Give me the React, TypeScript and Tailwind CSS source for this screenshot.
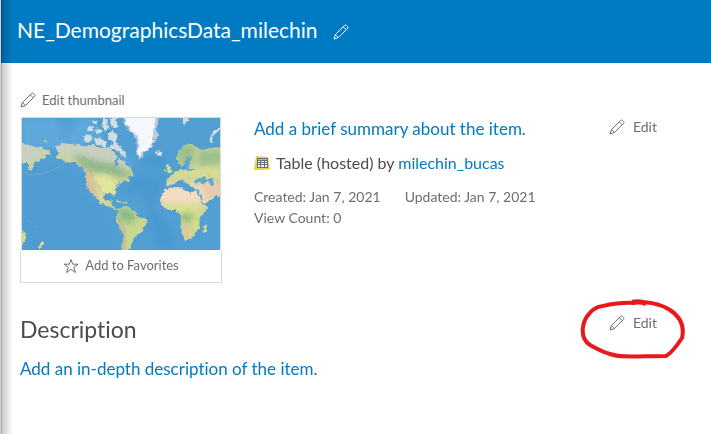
import type { ReactNode } from 'react';

function Pencil() {
  return (
    <svg className="h-4 w-4 shrink-0" viewBox="0 0 16 16" fill="none" stroke="currentColor" strokeWidth="1" strokeLinejoin="round" aria-hidden="true">
      <path d="M1 15 2.400 10.600 11.400 1.500Q12.400.5 13.400 1.400L14.600 2.600Q15.500 3.600 14.500 4.600L5.400 13.600ZM10.300 2.800 13.200 5.700M2.400 10.600 5.400 13.600" />
    </svg>
  );
}

function Star() {
  return (
    <svg className="h-4 w-4 shrink-0" viewBox="0 0 16 16" fill="none" stroke="currentColor" strokeWidth="1" aria-hidden="true">
      <path d="M8 1.500 9.700 6.200H15L10.800 9.300 12.400 14.500 8 11.300 3.600 14.500 5.200 9.300 1 6.200H6.300Z" />
    </svg>
  );
}

function TableIcon() {
  return (
    <svg className="h-4 w-4 shrink-0" viewBox="0 0 16 16" aria-hidden="true">
      <path d="M2 1 14 2 16 14.500 0 15Z" fill="#e5d34a" />
      <path d="M3 3h11v10H3Z" fill="#66707c" />
      <path d="M4 4h9v1H4Z" fill="#8fc4ec" />
      <path d="M4 6h2v1H4ZM7 6h3v1H7ZM11 6h2v1h-2ZM4 8h2v1H4ZM7 8h3v1H7ZM11 8h2v1h-2ZM4 10h2v2H4ZM7 10h3v2H7ZM11 10h2v2h-2Z" fill="#f5f5f5" />
    </svg>
  );
}

function WorldMap() {
  return (
    <svg className="block h-auto w-full" viewBox="36 99 594 396" role="img" aria-label="World map thumbnail">
      <defs>
        <filter id="soft" x="-30%" y="-30%" width="160%" height="160%" colorInterpolationFilters="sRGB"><feGaussianBlur stdDeviation="10" /></filter>
        <filter id="coast" x="-5%" y="-5%" width="110%" height="110%" colorInterpolationFilters="sRGB">
          <feTurbulence type="fractalNoise" baseFrequency=".09" numOctaves="2" seed="4" />
          <feDisplacementMap in="SourceGraphic" scale="14" xChannelSelector="R" yChannelSelector="G" />
        </filter>
        <clipPath id="land">
          <path d="M137 185 155 174 180 178 205 180 225 185 250 180 270 190 295 185 310 198 322 215 310 232 320 247 326 223 345 231 360 250 374 272 352 278 361 291 340 287 326 298 315 309 314 337 305 323 285 324 280 341 291 351 306 343 303 360 318 370 330 370 350 362 372 377 383 392 413 404 405 425 393 442 375 456 362 482 352 510 333 510 341 448 319 410 317 393 327 377 300 366 268 351 249 329 230 307 225 280 230 263 210 244 190 230 166 233 152 225 137 218 146 207Z" />
          <path d="M25 175 55 181 80 185 102 190 119 199 123 209 105 207 107 220 92 224 75 230 66 255 55 259 58 235 25 232ZM498 221 505 203 519 183 540 174 560 184 570 196 600 190 645 183V335L618 333 607 341 582 356 566 330 577 357 593 363 587 380 568 402 568 428 555 447 541 464 524 465 513 429 512 390 497 376 462 373 450 352 456 325 470 311 494 307 513 306 523 319 548 321 562 315 544 303 519 287 506 285 496 297 469 301 470 287 481 273 497 262 512 251 528 255 536 237 547 218 533 216 523 239 510 244Z" />
        </clipPath>
      </defs>
      <path d="M36 99h594v396H36Z" fill="#529fd4" />
      <g filter="url(#soft)">
        <path d="M36 99h205l40 60-60 30H36ZM310 200l70 30 80 25-20 30-60-15Z" fill="#65afdf" opacity=".65" />
        <path d="M375 230 465 205 450 315 430 370 480 415 500 495 440 495 415 375 385 310 345 340Z" fill="#3f91cc" opacity=".5" />
        <path d="M130 99h85l-50 70ZM40 275 180 240 220 330 280 380 315 495H60Z" fill="#4a99cf" opacity=".5" />
      </g>
      <g filter="url(#coast)">
        <g clipPath="url(#land)">
          <path d="M20 99h630v412H20Z" fill="#cbd49a" />
          <g filter="url(#soft)">
            <path d="M20 150H360V255L300 235 230 228 130 205 20 250Z" fill="#c9d0bf" />
            <path d="M190 205 250 225 320 240 370 270 325 280 245 258 205 235Z" fill="#8fb58a" />
            <path d="M242 262 300 268 328 285 310 335 270 350Z" fill="#e3e59b" />
            <path d="M215 250 243 260 272 340 253 340 215 300Z" fill="#d5be98" />
            <path d="M320 370 360 368 380 397 370 418 328 405Z" fill="#87ba87" />
            <path d="M355 415 405 400 380 455 350 490Z" fill="#c8d98c" />
            <path d="M312 410 335 430 345 505 325 505Z" fill="#c6a78f" />
            <path d="M498 180 560 180 545 240 505 240ZM570 195H645V236L560 240Z" fill="#9bbf8b" />
            <path d="M480 260 645 245V280H480Z" fill="#d5dd90" />
            <path d="M440 300 550 300 615 310 600 355 550 355 445 355Z" fill="#f6dcc5" />
            <path d="M580 285H645V345H580Z" fill="#e6cdae" />
            <path d="M440 370 565 364 580 375 530 384 470 380Z" fill="#e5e98d" />
            <path d="M510 385 550 387 550 409 515 405Z" fill="#7fb577" />
            <path d="M510 425 536 425 533 470 514 470Z" fill="#e8c299" />
            <path d="M545 395 575 395 575 440 545 460Z" fill="#d5df85" />
          </g>
          <path d="M211 231l30 25 8 25 18 24 15 31M322 398l20 33 1 43M520 235l18-37M591 265l38 29" stroke="#8f9973" strokeWidth="3" fill="none" opacity=".35" />
        </g>
        <path d="M334 90 354 134 370 146 380 166 380 202 389 226 400 211 404 201 424 190 432 173 446 151 440 132 448 90Z" fill="#b8c8da" />
        <path d="M339 90 359 133 374 145 385 165 384 204 390 218 397 201 418 189 429 166 430 132 441 90Z" fill="#f4f8fd" />
        <path d="M436 203 445 199 457 204 453 213 442 214Z" fill="#d8dfdc" />
        <path d="M221 151 240 149 248 158 239 173 222 165ZM234 127 251 124 249 139 231 137ZM252 160 270 157 291 173 284 184 259 179ZM258 129 277 139 268 146 257 140ZM280 99 297 105 290 119 300 127 288 140 276 120ZM245 107 263 104 259 119ZM300 100 325 95 317 117 327 124 312 130 302 119ZM292 148 307 137 323 152 316 169 326 185 347 202 349 216 330 208 319 194 299 189 312 174 298 165ZM327 184 341 195 334 201ZM509 95 517 107 522 122 528 112 539 103 529 95Z" fill="#d3dddd" />
        <path d="M632 130 608 147 602 170" stroke="#dbe4e4" strokeWidth="7" fill="none" />
        <path d="M469 246 477 235 481 249 489 260 474 264ZM462 255l6 0-2 8-5-1ZM581 426 592 417 587 440 579 446ZM30 431 43 439 49 455 41 475 30 479ZM95 472 103 475 91 493 83 489Z" fill="#d4dc86" />
        <path d="M572 279 583 274 590 284 607 277 613 303 602 302 597 288 585 295 565 294 551 290 556 281ZM556 312 562 309 579 344 574 344ZM315 298l11-7 1 8ZM535 217l8 1-7 32 14-1 6 5-23 5-8-17Z" fill="#61a8d4" />
        <path d="M321 345l26 5 5 6-16-3-18-3ZM347 360l7 1M105 167l6 1 1 5-7-1Z" fill="#c8d29b" />
      </g>
      <path d="M38 258Q60 278 102 264T164 235M54 405l10 9M70 423l9 5M37 400l5 5" stroke="#a9cfd3" strokeWidth="2" fill="none" opacity=".4" />
    </svg>
  );
}

function EditButton({ label }: { label: string }) {
  return (
    <button type="button" aria-label={label} className="flex cursor-pointer items-center gap-2 text-sm leading-5 text-[#6e6e6e]">
      <Pencil />
      Edit
    </button>
  );
}

function BlueLink({ children }: { children: ReactNode }) {
  return <a href="#" className="text-[#007ac2] hover:underline">{children}</a>;
}

export default function App() {
  return (
    <div className="relative min-h-screen border-l border-[#d5d5d5] bg-white font-['Lato','Open_Sans',sans-serif] text-[#4c4c4c] [font-variant-ligatures:none]">
      <div className="pointer-events-none absolute inset-y-0 left-0 w-3 border-l border-black/35 bg-linear-to-r from-black/20 to-transparent" />

      <header className="flex h-[63px] items-center gap-4 bg-[#007ac2] pl-4 text-white">
        <h1 className="-mt-1 text-[21px] leading-7">NE_DemographicsData_milechin</h1>
        <button type="button" aria-label="Edit title" className="cursor-pointer">
          <Pencil />
        </button>
      </header>

      <main className="pr-[54px] pl-[19px]">
        <button type="button" className="mt-[27px] flex cursor-pointer items-center gap-[6px] text-[13px] leading-5 text-[#6e6e6e]">
          <Pencil />
          Edit thumbnail
        </button>

        <section className="mt-[7px] flex items-start gap-8">
          <div className="w-[202px] shrink-0">
            <div className="mx-px border border-b-0 border-[#d9d9d9]">
              <WorldMap />
            </div>
            <button type="button" className="flex h-[33px] w-full cursor-pointer items-center justify-center gap-[6px] border border-t-0 border-[#d9d9d9] text-[13px] text-[#6e6e6e]">
              <Star />
              Add to Favorites
            </button>
          </div>

          <div className="min-w-0 flex-1">
            <p className="text-[17px] leading-6"><BlueLink>Add a brief summary about the item.</BlueLink></p>
            <div className="mt-[10px] flex items-center gap-[6px] text-[16px] leading-6">
              <TableIcon />
              <p>Table (hosted) by <BlueLink>milechin_bucas</BlueLink></p>
            </div>
            <div className="mt-[11px] flex flex-wrap gap-x-6 text-sm leading-[21px] text-[#6e6e6e]">
              <span>Created: Jan 7, 2021</span>
              <span>Updated: Jan 7, 2021</span>
              <span className="w-full">View Count: 0</span>
            </div>
          </div>

          <EditButton label="Edit summary" />
        </section>

        <section>
          <div className="mt-[30px] flex items-start justify-between">
            <h2 className="mt-[2px] text-[23px] leading-7">Description</h2>
            <div className="relative">
              <EditButton label="Edit description" />
              <svg className="pointer-events-none absolute -top-[15px] -left-[29px] h-[62px] w-[106px]" viewBox="0 0 106 62" fill="none" stroke="#e8191c" strokeWidth="4" strokeLinecap="round" strokeLinejoin="round" aria-hidden="true">
                <path d="M54 5C39 4 28 7 18 9C11 12 4 20 3 29C2 36 4 43 10 47C17 51 23 54 30 56C42 60 58 58 86 58C92 55 98 46 102 40C105 27 99 18 90 12C79 5 68 4 54 4" />
                <path d="M54 4Q61 3 64 5" strokeWidth="5" />
              </svg>
            </div>
          </div>
          <p className="mt-[14px] text-[17px] leading-6"><BlueLink>Add an in-depth description of the item.</BlueLink></p>
        </section>
      </main>
    </div>
  );
}
